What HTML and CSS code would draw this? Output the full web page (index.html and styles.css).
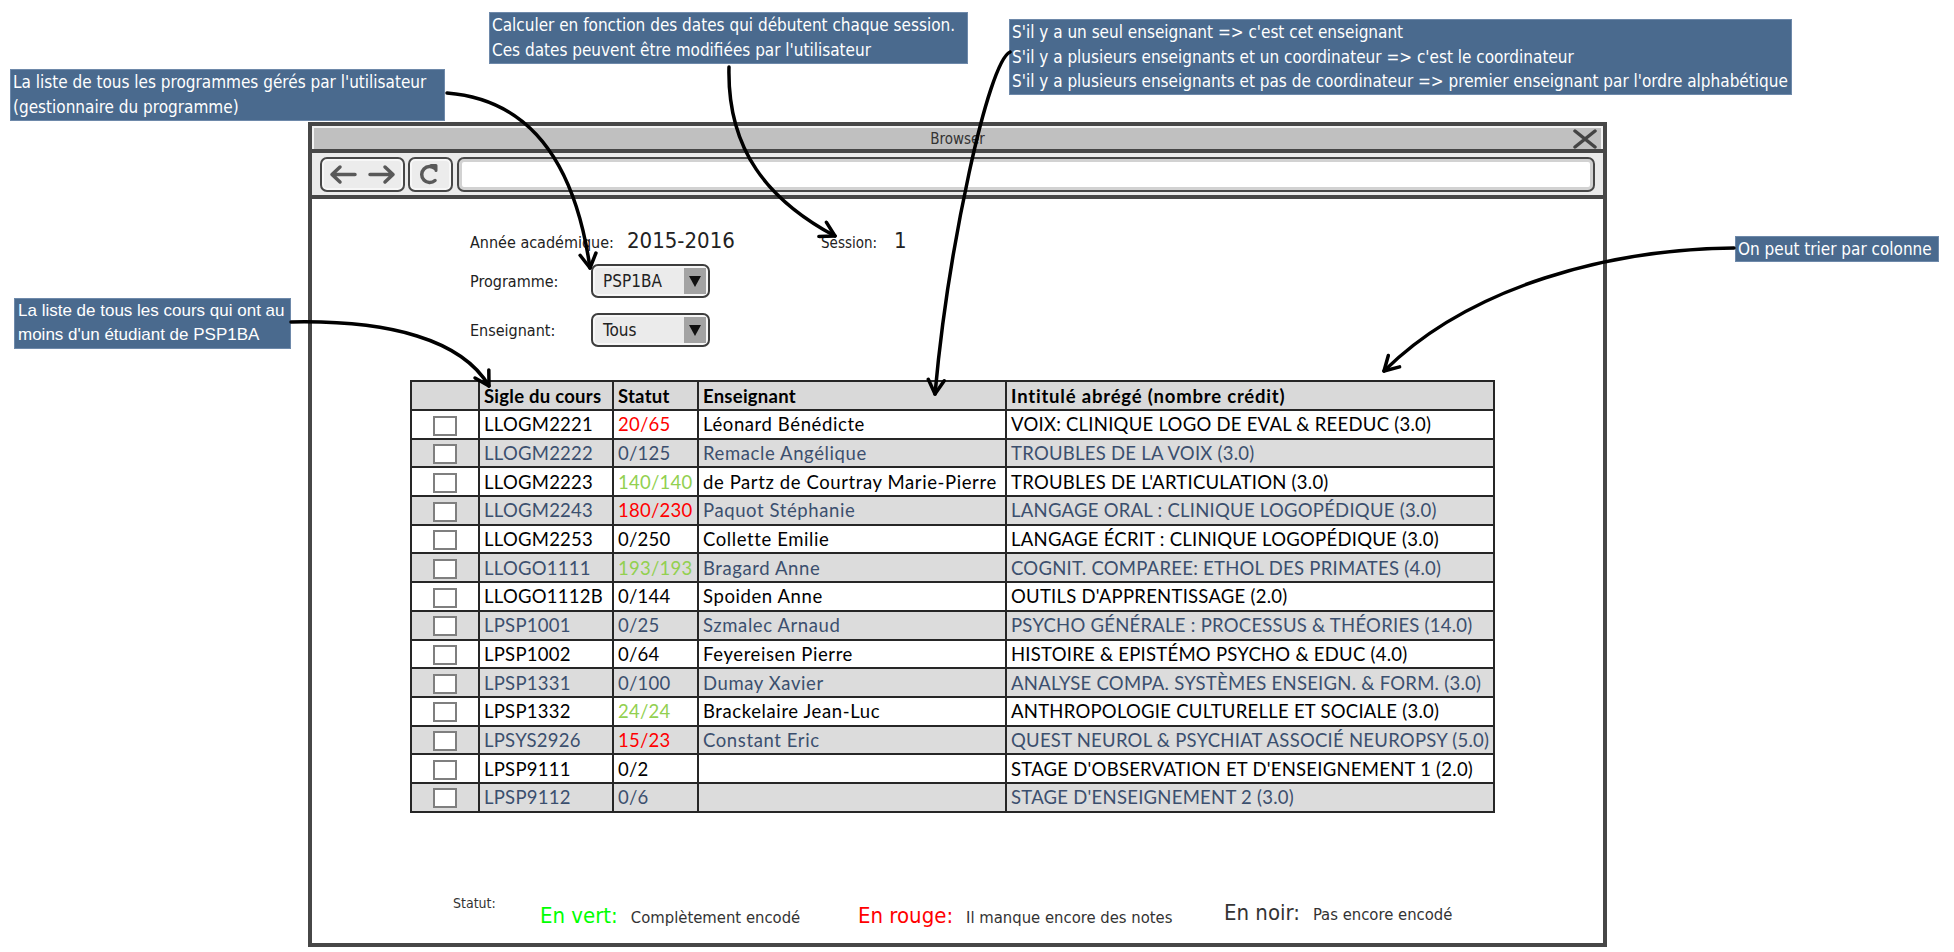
FILE: index.html
```html
<!DOCTYPE html>
<html lang="fr">
<head>
<meta charset="utf-8">
<title>Browser mockup</title>
<link rel="stylesheet" href="styles.css">
</head>
<body>
<div class="canvas">
  <div class="browser">
    <div class="titlebar">
      <span></span>
      <span class="title hand">Browser</span>
      <svg class="close" width="24" height="20" viewBox="0 0 24 20"><path d="M2 2 L22 18 M22 2 L2 18" stroke="#444" stroke-width="3.5" stroke-linecap="round"/></svg>
    </div>
    <div class="toolbar">
      <div class="btn nav">
        <svg width="81" height="31" viewBox="0 0 81 31"><path d="M10 15.5 H33 M18 8 L10 15.5 L18 23 M48 15.5 H71 M63 8 L71 15.5 L63 23" fill="none" stroke="#595959" stroke-width="3.5" stroke-linecap="round" stroke-linejoin="round"/></svg>
      </div>
      <div class="btn refresh">
        <svg width="41" height="31" viewBox="0 0 41 31"><path d="M25 9.5 A8 8 0 1 0 25 21.5" fill="none" stroke="#595959" stroke-width="3.5" stroke-linecap="round"/><path d="M21 6.5 H26 V11.5" fill="none" stroke="#595959" stroke-width="3" stroke-linecap="round" stroke-linejoin="round"/></svg>
      </div>
      <div class="address"></div>
    </div>
    <div class="content">
      <div class="form hand">
        <div class="frow frow-year">
          <span class="lbl lbl-year">Année académique:</span>
          <span class="big big-year">2015-2016</span>
          <span class="lbl lbl-session">Session:</span>
          <span class="big">1</span>
        </div>
        <div class="frow frow-prog">
          <span class="lbl lbl-sel">Programme:</span>
          <div class="select"><span class="sel-text">PSP1BA</span><span class="caret"></span></div>
        </div>
        <div class="frow">
          <span class="lbl lbl-sel">Enseignant:</span>
          <div class="select"><span class="sel-text">Tous</span><span class="caret"></span></div>
        </div>
      </div>

      <table class="courses">
        <colgroup>
          <col class="c-chk"><col class="c-sigle"><col class="c-statut"><col class="c-ens"><col class="c-int">
        </colgroup>
        <thead>
          <tr><th></th><th>Sigle du cours</th><th>Statut</th><th>Enseignant</th><th>Intitulé abrégé (nombre crédit)</th></tr>
        </thead>
        <tbody>
          <tr><td><span class="chk"></span></td><td>LLOGM2221</td><td class="red">20/65</td><td class="ens">Léonard Bénédicte</td><td>VOIX: CLINIQUE LOGO DE EVAL &amp; REEDUC (3.0)</td></tr>
          <tr class="alt"><td><span class="chk"></span></td><td>LLOGM2222</td><td>0/125</td><td class="ens">Remacle Angélique</td><td>TROUBLES DE LA VOIX (3.0)</td></tr>
          <tr><td><span class="chk"></span></td><td>LLOGM2223</td><td class="green">140/140</td><td class="ens">de Partz de Courtray Marie-Pierre</td><td>TROUBLES DE L'ARTICULATION (3.0)</td></tr>
          <tr class="alt"><td><span class="chk"></span></td><td>LLOGM2243</td><td class="red">180/230</td><td class="ens">Paquot Stéphanie</td><td>LANGAGE ORAL : CLINIQUE LOGOPÉDIQUE (3.0)</td></tr>
          <tr><td><span class="chk"></span></td><td>LLOGM2253</td><td>0/250</td><td class="ens">Collette Emilie</td><td>LANGAGE ÉCRIT : CLINIQUE LOGOPÉDIQUE (3.0)</td></tr>
          <tr class="alt"><td><span class="chk"></span></td><td>LLOGO1111</td><td class="green">193/193</td><td class="ens">Bragard Anne</td><td>COGNIT. COMPAREE: ETHOL DES PRIMATES (4.0)</td></tr>
          <tr><td><span class="chk"></span></td><td>LLOGO1112B</td><td>0/144</td><td class="ens">Spoiden Anne</td><td>OUTILS D'APPRENTISSAGE (2.0)</td></tr>
          <tr class="alt"><td><span class="chk"></span></td><td>LPSP1001</td><td>0/25</td><td class="ens">Szmalec Arnaud</td><td>PSYCHO GÉNÉRALE : PROCESSUS &amp; THÉORIES (14.0)</td></tr>
          <tr><td><span class="chk"></span></td><td>LPSP1002</td><td>0/64</td><td class="ens">Feyereisen Pierre</td><td>HISTOIRE &amp; EPISTÉMO PSYCHO &amp; EDUC (4.0)</td></tr>
          <tr class="alt"><td><span class="chk"></span></td><td>LPSP1331</td><td>0/100</td><td class="ens">Dumay Xavier</td><td>ANALYSE COMPA. SYSTÈMES ENSEIGN. &amp; FORM. (3.0)</td></tr>
          <tr><td><span class="chk"></span></td><td>LPSP1332</td><td class="green">24/24</td><td class="ens">Brackelaire Jean-Luc</td><td>ANTHROPOLOGIE CULTURELLE ET SOCIALE (3.0)</td></tr>
          <tr class="alt"><td><span class="chk"></span></td><td>LPSYS2926</td><td class="red">15/23</td><td class="ens">Constant Eric</td><td>QUEST NEUROL &amp; PSYCHIAT ASSOCIÉ NEUROPSY (5.0)</td></tr>
          <tr><td><span class="chk"></span></td><td>LPSP9111</td><td>0/2</td><td class="ens"></td><td>STAGE D'OBSERVATION ET D'ENSEIGNEMENT 1 (2.0)</td></tr>
          <tr class="alt"><td><span class="chk"></span></td><td>LPSP9112</td><td>0/6</td><td class="ens"></td><td>STAGE D'ENSEIGNEMENT 2 (3.0)</td></tr>
        </tbody>
      </table>

      <div class="legend hand">
        <span class="leg-title">Statut:</span>
        <div class="leg-item leg-green"><span class="leg-key">En vert:</span><span class="leg-desc">Complètement encodé</span></div>
        <div class="leg-item leg-red"><span class="leg-key">En rouge:</span><span class="leg-desc">Il manque encore des notes</span></div>
        <div class="leg-item leg-black"><span class="leg-key">En noir:</span><span class="leg-desc">Pas encore encodé</span></div>
      </div>
    </div>
  </div>

  <div class="note hand n1">La liste de tous les programmes gérés par l'utilisateur<br>(gestionnaire du programme)</div>
  <div class="note hand n2">Calculer en fonction des dates qui débutent chaque session.<br>Ces dates peuvent être modifiées par l'utilisateur</div>
  <div class="note hand n3">S'il y a un seul enseignant =&gt; c'est cet enseignant<br>S'il y a plusieurs enseignants et un coordinateur =&gt; c'est le coordinateur<br>S'il y a plusieurs enseignants et pas de coordinateur =&gt; premier enseignant par l'ordre alphabétique</div>
  <div class="note hand n4">On peut trier par colonne</div>
  <div class="note n5">La liste de tous les cours qui ont au<br>moins d'un étudiant de PSP1BA</div>

  <svg class="arrows" width="1954" height="952" viewBox="0 0 1954 952">
    <defs>
      <marker id="ah" viewBox="0 0 20 20" refX="17" refY="10" markerWidth="20" markerHeight="20" markerUnits="userSpaceOnUse" orient="auto">
        <path d="M3 2 L17 10 L3 18" fill="none" stroke="#000" stroke-width="3.5" stroke-linecap="round" stroke-linejoin="round"/>
      </marker>
    </defs>
    <g fill="none" stroke="#000" stroke-width="3.5" stroke-linecap="round">
      <path d="M447 93 C 535 100, 576 170, 590 268" marker-end="url(#ah)"/>
      <path d="M729 67 C 727 150, 768 200, 835 236" marker-end="url(#ah)"/>
      <path d="M1010 52 C 988 62, 948 250, 935 394" marker-end="url(#ah)"/>
      <path d="M1734 248 C 1610 249, 1470 286, 1384 371" marker-end="url(#ah)"/>
      <path d="M291 322 C 390 320, 462 340, 489 386" marker-end="url(#ah)"/>
    </g>
  </svg>
</div>
</body>
</html>
```

FILE: styles.css
```css
body {
  margin: 0;
  background: #ffffff;
}

.hand {
  font-family: "Liberation Sans Narrow", "DejaVu Sans Condensed", "Liberation Sans", sans-serif;
}

.canvas {
  position: relative;
  width: 1954px;
  height: 952px;
  box-sizing: border-box;
  padding: 122px 0 0 308px;
  overflow: hidden;
  background: #ffffff;
}

/* ---------- browser window ---------- */
.browser {
  width: 1299px;
  height: 825px;
  box-sizing: border-box;
  border: 4px solid #474747;
  display: flex;
  flex-direction: column;
  background: #ffffff;
}

.titlebar {
  height: 23px;
  box-sizing: border-box;
  background: #c0c0c0;
  border: 2px solid #f2f2f2;
  border-bottom: 0;
  display: grid;
  grid-template-columns: 1fr auto 1fr;
  align-items: center;
}

.title {
  font-size: 15px;
  color: #333;
}

.close {
  justify-self: end;
  margin-right: 4px;
}

.toolbar {
  height: 50px;
  box-sizing: border-box;
  border-top: 4px solid #474747;
  border-bottom: 4px solid #474747;
  background: #ebebeb;
  display: flex;
  align-items: center;
  padding: 0 8px;
}

.btn {
  height: 35px;
  box-sizing: border-box;
  border: 2px solid #474747;
  border-radius: 7px;
  background: #ececec;
  box-shadow: inset 0 0 0 2px #f7f7f7;
  display: flex;
  align-items: center;
  justify-content: center;
}

.nav { width: 85px; }
.refresh { width: 45px; margin-left: 3px; }

.address {
  flex: 1;
  height: 35px;
  margin-left: 4px;
  box-sizing: border-box;
  border: 2px solid #474747;
  border-radius: 7px;
  background: #ffffff;
  box-shadow: inset 0 0 0 3px #d2d2d2;
}

.content {
  flex: 1;
  display: flex;
  flex-direction: column;
}

/* ---------- form ---------- */
.form {
  padding: 25px 0 0 158px;
  color: #222;
}

.frow {
  display: flex;
  align-items: center;
  height: 34px;
}

.frow-year { margin-bottom: 6px; align-items: baseline; padding-top: 4px; box-sizing: border-box; }
.frow-prog { margin-bottom: 15px; }

.lbl { font-size: 16px; }
.lbl-year { width: 157px; }
.lbl-session { width: 73px; font-size: 15px; }
.lbl-sel { width: 121px; }

.big { font-size: 22px; color: #222; }
.big-year { width: 194px; }

.select {
  width: 119px;
  height: 34px;
  box-sizing: border-box;
  border: 2px solid #3d3d3d;
  border-radius: 7px;
  background: #ebebeb;
  box-shadow: inset 0 0 0 2px #f6f6f6;
  display: flex;
  align-items: stretch;
  padding: 2px;
}

.sel-text {
  flex: 1;
  padding-left: 8px;
  font-size: 17px;
  display: flex;
  align-items: center;
  color: #222;
}

.caret {
  width: 22px;
  background: #a3a3a3;
  position: relative;
}

.caret::after {
  content: "";
  position: absolute;
  left: 5px;
  top: 8px;
  border-left: 6px solid transparent;
  border-right: 6px solid transparent;
  border-top: 11px solid #111;
}

/* ---------- table ---------- */
.courses {
  margin: 33px 0 0 98px;
  border-collapse: collapse;
  table-layout: fixed;
  width: 1083px;
  font-family: "Lato", "Open Sans", sans-serif;
  font-size: 18.5px;
  letter-spacing: 0.25px;
  color: #000;
}

.c-chk { width: 68px; }
.c-sigle { width: 134px; }
.c-statut { width: 85px; }
.c-ens { width: 308px; }
.c-int { width: 488px; }

.courses th,
.courses td {
  border: 2px solid #262626;
  padding: 0 0 0 4px;
  text-align: left;
  white-space: nowrap;
  overflow: hidden;
  line-height: 20px;
}

.courses td.ens { letter-spacing: 0.6px; }

.courses thead tr { height: 29px; background: #d9d9d9; }
.courses th { font-weight: 700; }
.courses th:last-child { letter-spacing: 0.8px; }

.courses tbody tr { height: 28.7px; background: #ffffff; }
.courses tbody tr.alt { background: #dcdcdc; color: #3b4f6e; }

.courses td:first-child { text-align: center; padding: 0; }

.chk {
  display: inline-block;
  width: 20px;
  height: 16px;
  border: 2px solid #7f7f7f;
  background: #ffffff;
  vertical-align: middle;
}

.courses td.red { color: #ff0000; }
.courses td.green { color: #92d050; }

/* ---------- legend ---------- */
.legend {
  margin: 82px 0 0 141px;
  display: flex;
  align-items: flex-start;
  color: #333;
}

.leg-title { width: 87px; font-size: 14px; }

.leg-item {
  display: flex;
  align-items: baseline;
  gap: 13px;
  margin-top: 8px;
}

.leg-green { width: 318px; }
.leg-red { width: 366px; }

.leg-key { font-size: 22px; }
.leg-desc { font-size: 16.5px; color: #333; }

.leg-green .leg-key { color: #00ff00; }
.leg-red .leg-key { color: #ff0000; }
.leg-black .leg-key { color: #333; }
.leg-black { margin-top: 5px; }

/* ---------- annotations ---------- */
.note {
  position: absolute;
  box-sizing: border-box;
  background: #4a6a8e;
  color: #ffffff;
  border: 1px solid #6e89aa;
  padding: 0 2px;
  white-space: nowrap;
}

.n1 { left: 10px; top: 69px; width: 435px; height: 52px; font-size: 17px; line-height: 25px; }
.n2 { left: 489px; top: 12px; width: 479px; height: 52px; font-size: 17px; line-height: 25px; }
.n3 { left: 1009px; top: 19px; width: 783px; height: 76px; font-size: 17px; line-height: 24.7px; }
.n4 { left: 1735px; top: 236px; width: 204px; height: 26px; font-size: 17px; line-height: 24px; }
.n5 {
  left: 14px; top: 298px; width: 277px; height: 51px;
  font-family: "Liberation Sans", sans-serif;
  font-size: 17px; line-height: 24px; padding: 0 3px;
}

.arrows {
  position: absolute;
  left: 0;
  top: 0;
  pointer-events: none;
}
```
